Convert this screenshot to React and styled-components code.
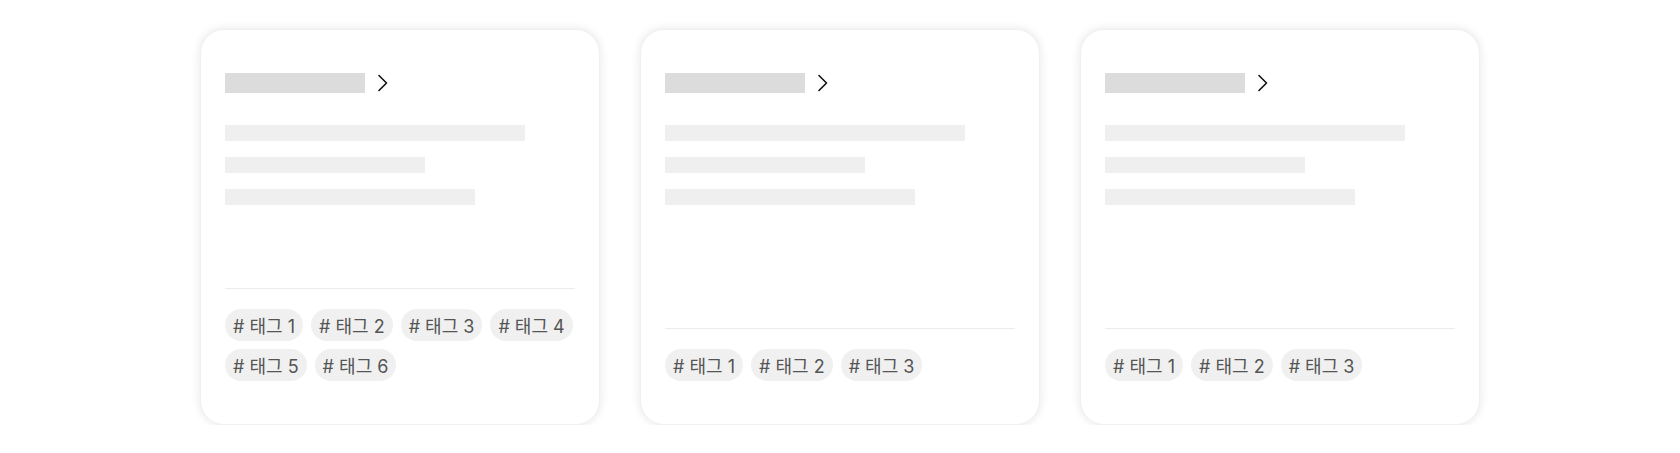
import React from "react";
import styled, { createGlobalStyle } from "styled-components";

const GlobalStyle = createGlobalStyle`
  html, body {
    margin: 0;
    padding: 0;
    background: #ffffff;
    font-family: Inter, "Noto Sans CJK KR", sans-serif;
  }
`;

const Page = styled.div`
  display: flex;
  justify-content: center;
  align-items: stretch;
  gap: 40px;
  padding-top: 29px;
`;

const Card = styled.div`
  width: 400px;
  box-sizing: border-box;
  display: flex;
  flex-direction: column;
  background: #ffffff;
  border: 1px solid #f0f0f0;
  border-radius: 24px;
  box-shadow: 0 0 10px rgba(0, 0, 0, 0.1);
  padding: 43px 24px 43px;
`;

const Body = styled.div`
  display: flex;
  flex-direction: column;
  min-height: 215px;
  flex: 1;
`;

const TitleRow = styled.div`
  display: flex;
  align-items: center;
  gap: 12px;
  height: 20px;
  margin-bottom: 32px;
  svg {
    display: block;
  }
`;

const TitleBar = styled.div`
  width: 140px;
  height: 20px;
  background: #dcdcdc;
`;

const Lines = styled.div`
  display: flex;
  flex-direction: column;
  gap: 16px;
`;

const Line = styled.div`
  height: 16px;
  width: ${(p) => p.w}px;
  background: #efefef;
`;

const Footer = styled.div`
  border-top: 1px solid #ececec;
  padding-top: 20px;
  display: flex;
  flex-wrap: wrap;
  gap: 8px;
`;

const Tag = styled.span`
  display: inline-flex;
  align-items: center;
  height: 32px;
  padding: 0 8px;
  border-radius: 16px;
  background: #f0f0f0;
  color: #555555;
  font-size: 18px;
  white-space: nowrap;
  font-family: Inter, "Noto Sans CJK KR", sans-serif;
`;

function Chevron() {
  return (
    <svg width="12" height="18" viewBox="0 0 12 18" fill="none">
      <polyline
        points="2,1.5 9.5,9 2,16.5"
        stroke="#111"
        strokeWidth="1.6"
        strokeLinecap="round"
        strokeLinejoin="round"
      />
    </svg>
  );
}

function PreviewCard({ tags }) {
  return (
    <Card>
      <Body>
        <TitleRow>
          <TitleBar />
          <Chevron />
        </TitleRow>
        <Lines>
          <Line w={300} />
          <Line w={200} />
          <Line w={250} />
        </Lines>
      </Body>
      <Footer>
        {tags.map((t) => (
          <Tag key={t}># 태그 {t}</Tag>
        ))}
      </Footer>
    </Card>
  );
}

export default function App() {
  return (
    <>
      <GlobalStyle />
      <Page>
        <PreviewCard tags={[1, 2, 3, 4, 5, 6]} />
        <PreviewCard tags={[1, 2, 3]} />
        <PreviewCard tags={[1, 2, 3]} />
      </Page>
    </>
  );
}
